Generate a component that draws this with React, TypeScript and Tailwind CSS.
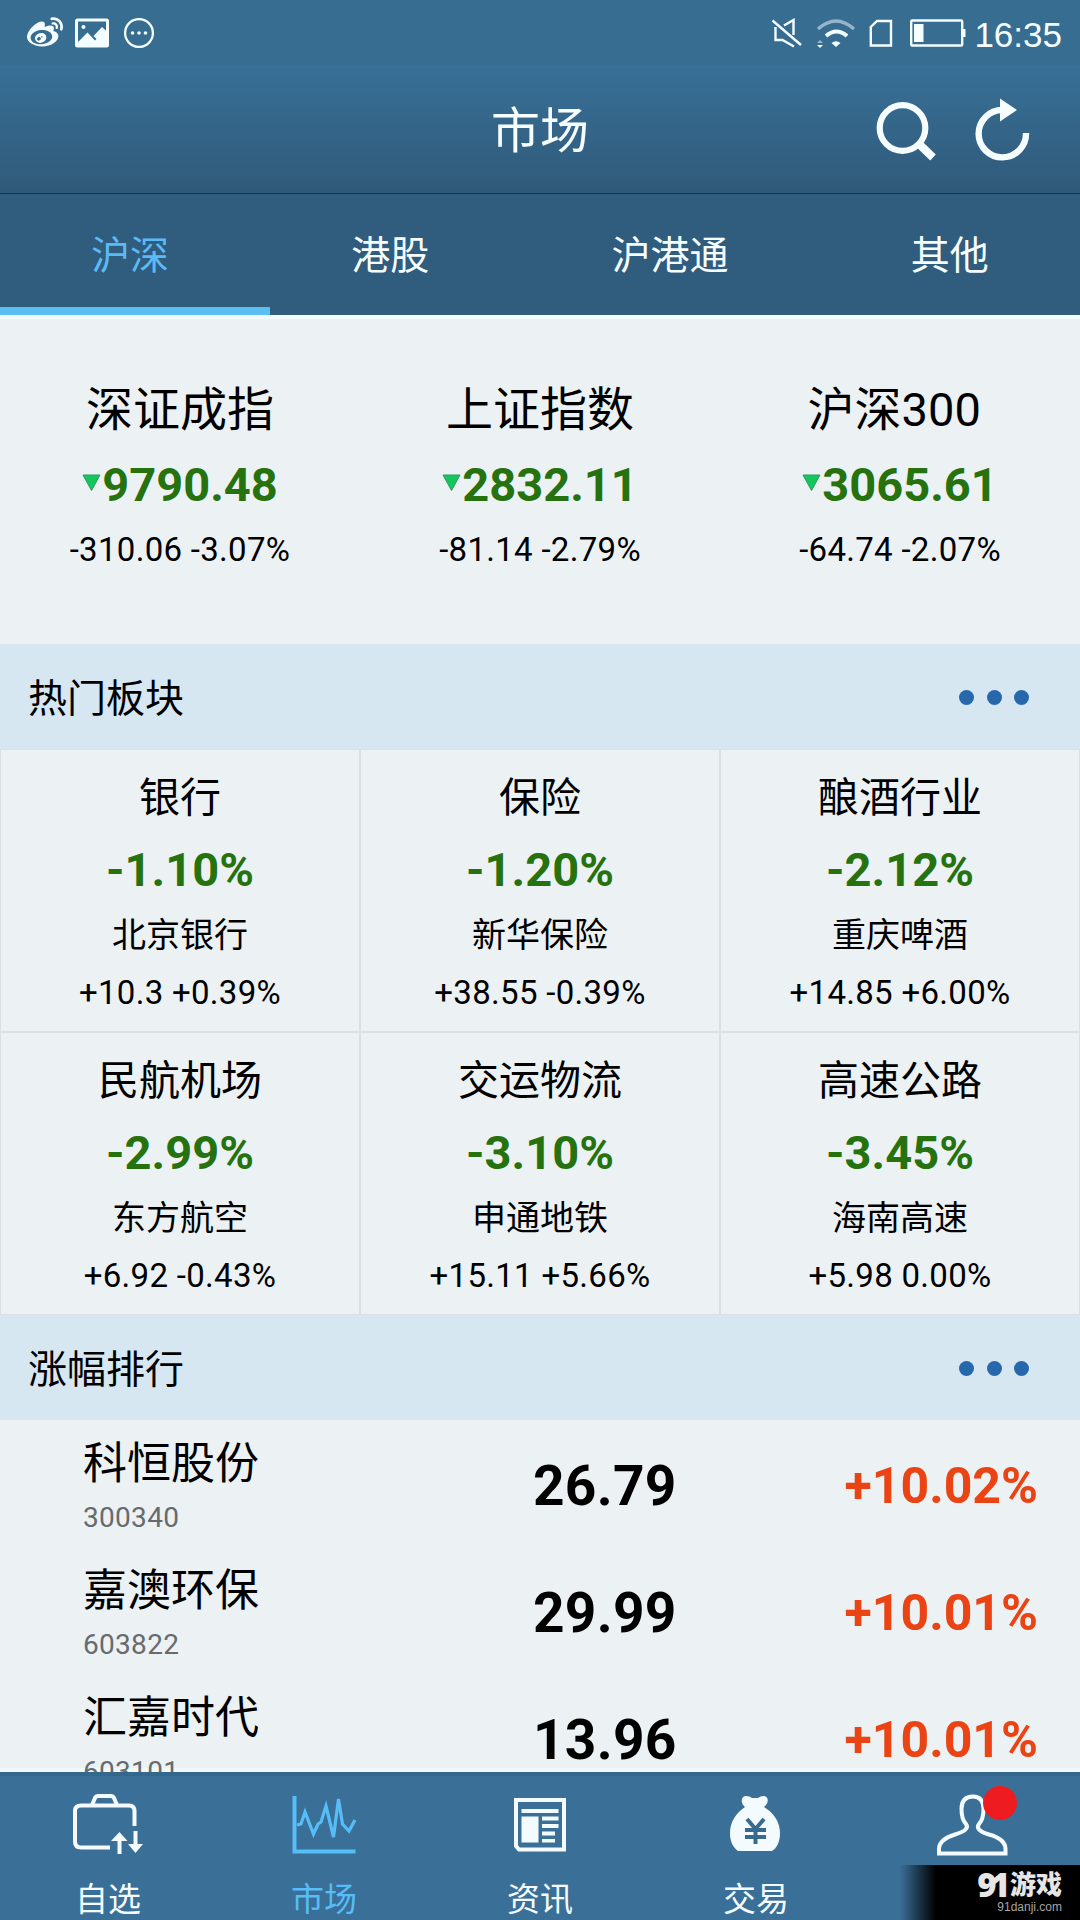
import { ReactNode } from 'react';
import { FaWeibo } from 'react-icons/fa';

type Quote = {
  name: string;
  value: string;
  change: string;
};

type Sector = {
  name: string;
  percent: string;
  stock: string;
  detail: string;
};

type Stock = {
  name: string;
  code: string;
  price: string;
  percent: string;
};

const tabs = ['沪深', '港股', '沪港通', '其他'];

const indexes: Quote[] = [
  { name: '深证成指', value: '9790.48', change: '-310.06 -3.07%' },
  { name: '上证指数', value: '2832.11', change: '-81.14 -2.79%' },
  { name: '沪深300 ', value: '3065.61', change: '-64.74 -2.07%' }
];

const sectors: Sector[] = [
  { name: '银行', percent: '-1.10%', stock: '北京银行', detail: '+10.3 +0.39%' },
  { name: '保险', percent: '-1.20%', stock: '新华保险', detail: '+38.55 -0.39%' },
  { name: '酿酒行业', percent: '-2.12%', stock: '重庆啤酒', detail: '+14.85 +6.00%' },
  { name: '民航机场', percent: '-2.99%', stock: '东方航空', detail: '+6.92 -0.43%' },
  { name: '交运物流', percent: '-3.10%', stock: '申通地铁', detail: '+15.11 +5.66%' },
  { name: '高速公路', percent: '-3.45%', stock: '海南高速', detail: '+5.98 0.00%' }
];

const gainers: Stock[] = [
  { name: '科恒股份', code: '300340', price: '26.79', percent: '+10.02%' },
  { name: '嘉澳环保', code: '603822', price: '29.99', percent: '+10.01%' },
  { name: '汇嘉时代', code: '603101', price: '13.96', percent: '+10.01%' }
];

function StatusBar() {
  return (
    <div className="flex h-[66px] items-center justify-between bg-[#386d92] pl-[27px] pr-[18px] text-[#f4fdff]">
      <div className="flex items-center gap-3">
        <FaWeibo className="h-9 w-9" />
        <svg className="h-[30px] w-[34px]" viewBox="0 0 34 30" fill="none">
          <rect x="1.5" y="2" width="31" height="26" rx="1" stroke="currentColor" strokeWidth="3" />
          <circle cx="8.5" cy="9" r="2" fill="currentColor" />
          <path d="M2 25 12.5 14.5 20 22.5 21.5 21 18.5 18 27 9 33 14.5V28H2Z" fill="currentColor" />
        </svg>
        <svg className="ml-[3px] h-[30px] w-[30px]" viewBox="0 0 30 30" fill="none">
          <circle cx="15" cy="15" r="13.9" stroke="currentColor" strokeWidth="2.3" />
          <circle cx="8.5" cy="15" r="1.8" fill="currentColor" />
          <circle cx="15" cy="15" r="1.8" fill="currentColor" />
          <circle cx="21.5" cy="15" r="1.8" fill="currentColor" />
        </svg>
      </div>
      <div className="flex items-center">
        <svg className="h-[30px] w-[31px]" viewBox="0 0 31 30" fill="none" stroke="currentColor" strokeWidth="2.4">
          <path d="M1.5 2.5 30 27" />
          <path d="M13 7.5 22.5 2V17" />
          <path d="M4.5 9V22H11.5L23 28.5" />
        </svg>
        <svg className="ml-[14px] h-[30px] w-[40px]" viewBox="0 0 40 30" fill="none" stroke="currentColor">
          <path d="M2 11Q20-5 38 11" strokeWidth="3.4" opacity=".5" />
          <path d="M10 18Q20.5 9 31 18" strokeWidth="4" />
          <path d="M15.500 25Q20 21.5 24.5 25L20 29Z" fill="currentColor" stroke="none" />
          <path d="M1 25 4 22 7 25Z" fill="currentColor" stroke="none" opacity=".5" />
          <path d="M1 27H7L4 30Z" fill="currentColor" stroke="none" />
        </svg>
        <svg className="ml-[13px] h-[30px] w-[24px]" viewBox="0 0 24 30" fill="none">
          <path d="M8 3H22V27.5H1.8V9Z" stroke="currentColor" strokeWidth="2.4" />
        </svg>
        <svg className="ml-[17px] h-[30px] w-[56px]" viewBox="0 0 56 30" fill="none">
          <rect x="1.2" y="2.5" width="51" height="25" rx="1" stroke="currentColor" strokeWidth="2.4" />
          <rect x="4" y="6" width="9.5" height="18" fill="currentColor" />
          <rect x="52" y="11" width="3.5" height="8" fill="currentColor" />
        </svg>
        <span className="ml-[8px] mt-[4px] font-['Liberation_Sans',sans-serif] text-[35px] leading-[40px]">16:35</span>
      </div>
    </div>
  );
}

function Header() {
  return (
    <header className="grid h-[127px] grid-cols-3 items-center bg-linear-to-b from-[#387097] to-[#305a7a] text-[#f6fdff]">
      <h1 className="col-start-2 pt-[5px] text-center text-[49px] leading-[60px]">市场</h1>
      <div className="flex justify-end gap-[38px] pb-[2px] pr-[49px]">
        <button type="button" aria-label="搜索">
          <svg className="h-[66px] w-[62px]" viewBox="0 0 62 66" fill="none" stroke="currentColor">
            <circle cx="27.500" cy="32" r="22.800" strokeWidth="6.200" />
            <path d="M43 47 58 61.500" strokeWidth="8" />
          </svg>
        </button>
        <button type="button" aria-label="刷新">
          <svg className="h-[66px] w-[56px]" viewBox="0 0 56 66" fill="none">
            <path d="M27.500 14A23.700 23.700 0 1 0 51 37" stroke="currentColor" strokeWidth="6.400" />
            <path d="M25 2.500 42 14 25 25.500Z" fill="currentColor" />
          </svg>
        </button>
      </div>
    </header>
  );
}

function TabBar() {
  return (
    <nav className="border-t border-[#0d3450] bg-[#305c7d]">
      <div className="flex h-[113px] pt-[2px]">
        {tabs.map((tab, index) => (
          <button
            key={tab}
            type="button"
            className={[
              'flex-auto pt-[8px] text-[39px] leading-[60px]',
              index === 0 ? 'text-[#5bbaf6]' : 'text-[#f6fdff]'
            ].join(' ')}
          >
            {tab}
          </button>
        ))}
      </div>
      <div className="h-[8px] w-1/4 bg-[#5bc0f1]" />
    </nav>
  );
}

function SectionHeader({ title }: { title: string }) {
  return (
    <div className="flex h-[105px] items-center justify-between bg-[#d6e7f1] pl-[28px] pr-[51px]">
      <h2 className="pt-[4px] text-[39px] leading-[60px]">{title}</h2>
      <div className="mt-[2px] flex gap-[12.5px]">
        <span className="h-[15px] w-[15px] rounded-full bg-[#2768ad]" />
        <span className="h-[15px] w-[15px] rounded-full bg-[#2768ad]" />
        <span className="h-[15px] w-[15px] rounded-full bg-[#2768ad]" />
      </div>
    </div>
  );
}

function IndexCell({ quote }: { quote: Quote }) {
  return (
    <div className="flex flex-col items-center">
      <p className="whitespace-pre text-[47px] leading-[70px]">{quote.name}</p>
      <p className="flex items-center text-[47px] font-bold leading-[80px] text-[#26720f]">
        <svg className="mt-[-4px] mr-px h-[18px] w-[19px]" viewBox="0 0 19 18">
          <path d="M1 1H18L9.500 16.500Z" fill="#12c75c" stroke="#2c9a5c" strokeWidth="1" />
        </svg>
        {quote.value}
      </p>
      <p className="pt-px text-[33px] leading-[48px] tracking-[0.3px]">{quote.change}</p>
    </div>
  );
}

function SectorCell({ sector }: { sector: Sector }) {
  return (
    <div className="flex h-[283px] flex-col items-center border border-[#dae0e3] pt-[18px]">
      <p className="text-[41px] leading-[60px]">{sector.name}</p>
      <p className="text-[47px] font-bold leading-[84px] text-[#26720f]">{sector.percent}</p>
      <p className="text-[34px] leading-[46px]">{sector.stock}</p>
      <p className="text-[33px] leading-[69px] tracking-[0.3px]">{sector.detail}</p>
    </div>
  );
}

function StockRow({ stock }: { stock: Stock }) {
  return (
    <li className="flex h-[127px] items-center pl-[83px] pr-[42px] pt-[5px]">
      <div className="w-[450px] pt-[4px]">
        <p className="text-[44px] leading-[60px]">{stock.name}</p>
        <p className="text-[28px] leading-[48px] tracking-[0.3px] text-[#666b6e]">{stock.code}</p>
      </div>
      <p className="text-[55px] font-bold leading-[60px] tracking-[0.3px]">{stock.price}</p>
      <p className="flex-1 text-right text-[50px] font-bold leading-[60px] text-[#ea4314]">{stock.percent}</p>
    </li>
  );
}

function NavItem({ label, active, children }: { label: string; active?: boolean; children: ReactNode }) {
  return (
    <button
      type="button"
      className={['flex flex-1 flex-col items-center', active ? 'text-[#56bdf7]' : 'text-[#f4fbff]'].join(' ')}
    >
      {children}
      <span className="text-[33px] leading-[40px]">{label}</span>
    </button>
  );
}

function BottomNav() {
  return (
    <nav className="relative flex h-[148px] shrink-0 border-t-4 border-[#33678c] bg-[#3a6f97] pt-[12px]">
      <NavItem label="自选">
        <svg className="h-[92px] w-[80px]" viewBox="0 0 80 92" fill="none" stroke="currentColor">
          <path d="M42 59.500H13Q7 59.500 7 53.500V23Q7 17.500 13 17.500H61Q66.500 17.500 66.500 23V38" strokeWidth="4" />
          <path d="M24 17 27 10Q28 8 30 8H43Q45 8 46 10L49 17" strokeWidth="4" />
          <path d="M51.500 66V53" strokeWidth="4" />
          <path d="M43 53 51.500 44 59.500 53Z" fill="currentColor" stroke="none" />
          <path d="M67.500 43V58" strokeWidth="4" />
          <path d="M60 56H75L67.500 65Z" fill="currentColor" stroke="none" />
        </svg>
      </NavItem>
      <NavItem label="市场" active>
        <svg className="h-[92px] w-[80px]" viewBox="0 0 80 92" fill="none" stroke="currentColor">
          <path d="M10.500 8V63.500H71.500" strokeWidth="4" />
          <path
            d="M13 37 17 36 21 24 29.500 46 34 36 37 34 42 18 49.500 49 54.500 11 58.500 36 65 43 71 32"
            strokeWidth="3.200"
          />
        </svg>
      </NavItem>
      <NavItem label="资讯">
        <svg className="h-[92px] w-[80px]" viewBox="0 0 80 92" fill="none">
          <path d="M16 12H64V61.500H19L16 58Z" stroke="currentColor" strokeWidth="4" />
          <path
            d="M21.500 21H58.500V25H21.500ZM21.500 28.500H38.500V54.500H21.500ZM42 28.500H58.500V32.500H42ZM42 36H58.500V40H42ZM42 43.500H55V47.500H42ZM42 51H55V54.500H42Z"
            fill="currentColor"
          />
        </svg>
      </NavItem>
      <NavItem label="交易">
        <svg className="h-[92px] w-[80px]" viewBox="0 0 80 92" fill="none">
          <path
            d="M29 19C24 15 25 8 30 8Q34 8 36 10H42Q44 8 48 8C53 9 53 15 48 19C58 25 64 34 64 45C64 54 61 60 56 63H22C17 59 14 54 14 45C14 34 20 25 29 19Z"
            fill="currentColor"
          />
          <path d="M31 31 39.500 41 48 31M39.500 41V56M29 42H50M29 49H50" stroke="#386a8d" strokeWidth="4" />
        </svg>
      </NavItem>
      <NavItem label="">
        <svg className="h-[92px] w-[80px]" viewBox="0 0 80 92" fill="none">
          <path
            d="M7 65.500V61C7 53 15 49 23 46.500C33 43.500 37 40 34 36C31 33 29.500 28 29.500 21Q29.500 8.500 41 8.500Q51.500 8.500 51.500 21C51.500 28 50 33 47 36C44 40 47 43.500 57 46.500C66 49 73.500 53 73.500 61V65.500Z"
            stroke="currentColor"
            strokeWidth="4"
          />
        </svg>
      </NavItem>
      <span className="absolute right-[63px] top-[10px] h-[34px] w-[34px] rounded-full bg-[#ee1c21]" />
      <div className="absolute bottom-0 right-0 flex h-[55px] w-[180px] flex-col items-end bg-linear-to-r from-transparent to-black to-[20%] pr-[18px] pt-[6px] text-[#e6e6e6]">
        <div className="flex items-center leading-[28px]">
          <span className="mr-[6px] font-['Open_Sans',sans-serif] text-[33px] font-extrabold tracking-[-6px]">91</span>
          <span className="text-[26px] font-black">游戏</span>
        </div>
        <span className="font-['Liberation_Sans',sans-serif] text-[12px] leading-[16px] text-[#a5a5a5]">91danji.com</span>
      </div>
    </nav>
  );
}

export default function App() {
  return (
    <div className="flex h-[1920px] w-[1080px] flex-col overflow-hidden bg-[#ecf1f4] font-['Roboto','Noto_Sans_CJK_SC',sans-serif] text-black">
      <StatusBar />
      <Header />
      <TabBar />
      <main className="min-h-0 flex-1 overflow-hidden border-t-4 border-[#f2f9fb] bg-linear-to-t from-[#f2f9fb] from-[4px] to-transparent to-[4px]">
        <section className="grid h-[325px] grid-cols-3 pt-[56px]">
          {indexes.map((quote) => (
            <IndexCell key={quote.name} quote={quote} />
          ))}
        </section>
        <SectionHeader title="热门板块" />
        <section className="grid grid-cols-3">
          {sectors.map((sector) => (
            <SectorCell key={sector.name} sector={sector} />
          ))}
        </section>
        <SectionHeader title="涨幅排行" />
        <ul>
          {gainers.map((stock) => (
            <StockRow key={stock.code} stock={stock} />
          ))}
        </ul>
      </main>
      <BottomNav />
    </div>
  );
}
